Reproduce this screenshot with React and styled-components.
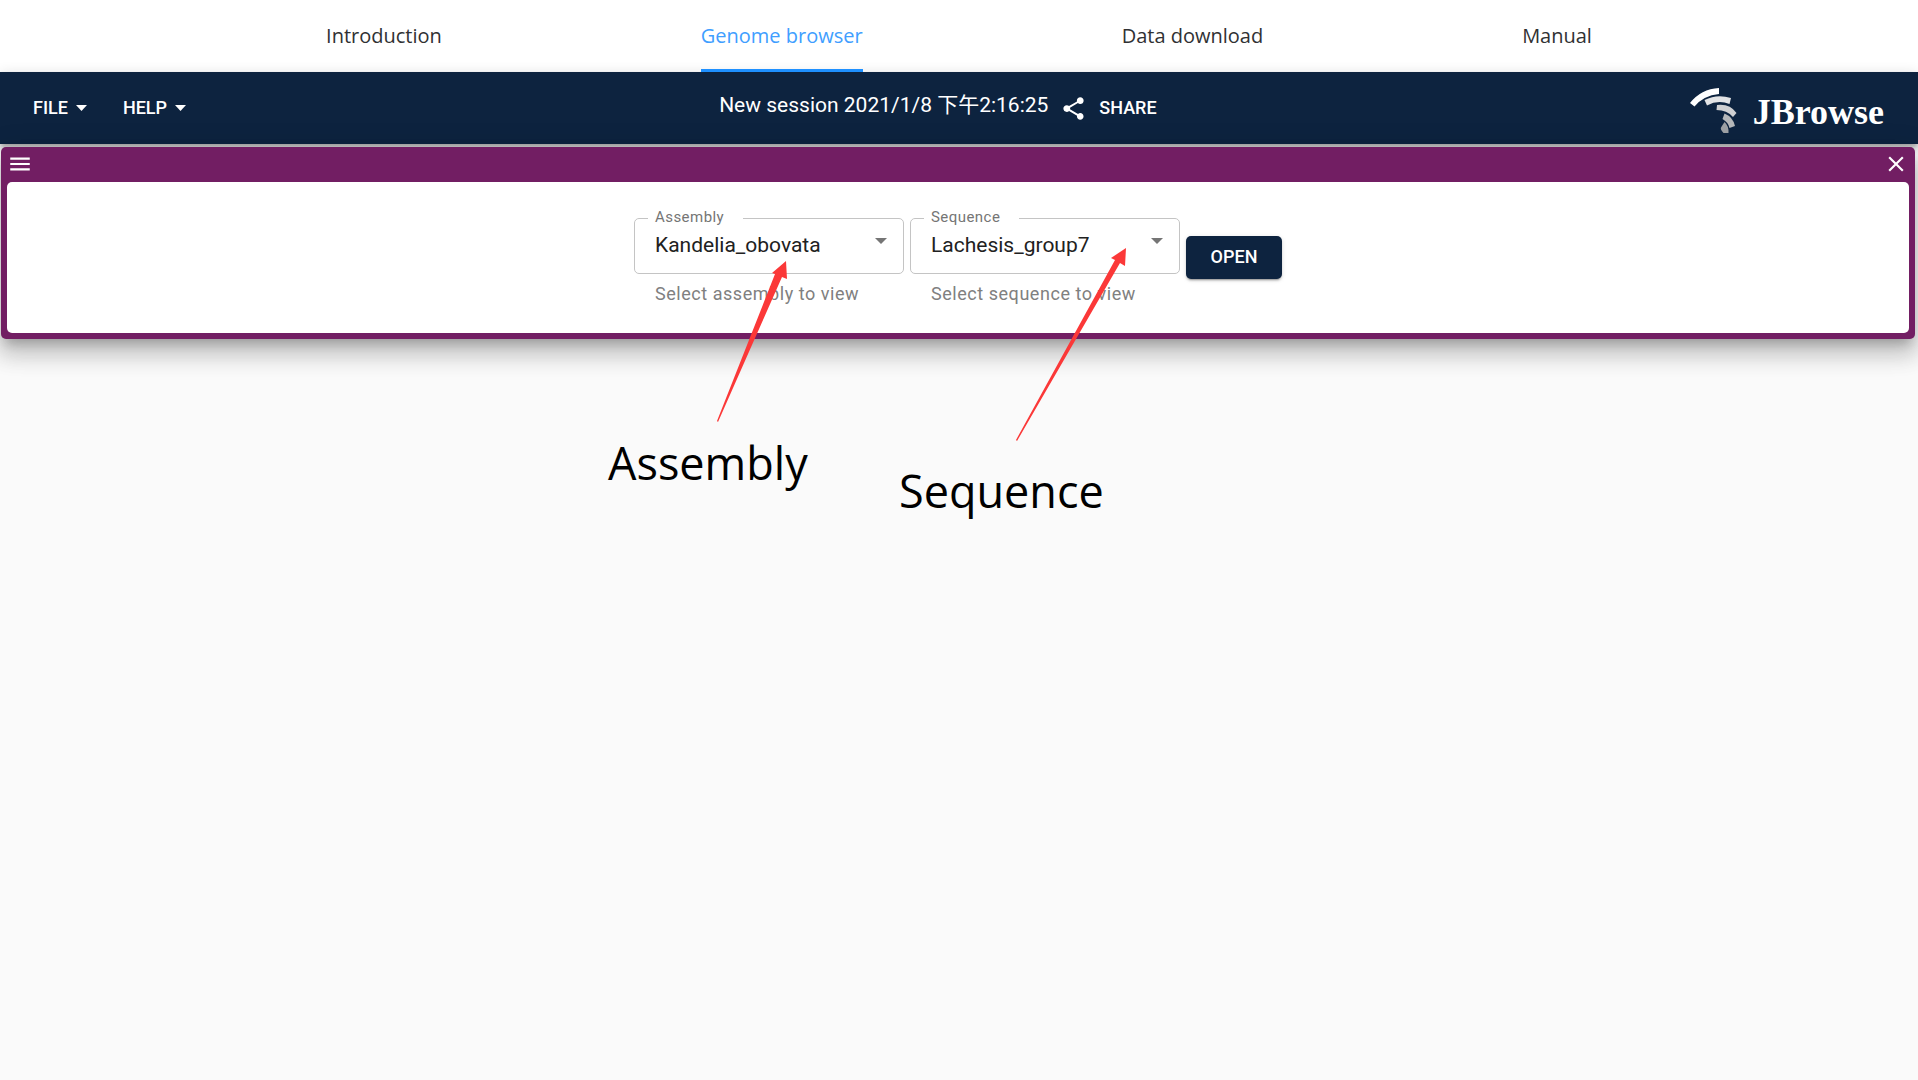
import React from "react";
import styled, { createGlobalStyle } from "styled-components";

const roboto = `Roboto, "Noto Sans CJK SC", sans-serif`;
const humanist = `"Open Sans", "Noto Sans", sans-serif`;
const navy = "#0d233f";
const purple = "#721e63";

const GlobalStyle = createGlobalStyle`
  *, *::before, *::after { box-sizing: border-box; }
  body { margin: 0; background: #fafafa; font-family: ${roboto}; }
`;

const Page = styled.div`
  min-height: 100vh;
  overflow-x: hidden;
`;

const SiteNav = styled.nav`
  display: flex;
  justify-content: space-between;
  height: 72px;
  padding: 0 17%;
  background: #fff;
`;

const NavLink = styled.a`
  display: flex;
  align-items: center;
  height: 72px;
  border-top: 3px solid transparent;
  border-bottom: 3px solid ${(p) => (p.$active ? "#1e90ff" : "transparent")};
  color: ${(p) => (p.$active ? "#409eff" : "#303133")};
  font: 400 20px/24px ${humanist};
  text-decoration: none;
  white-space: nowrap;
`;

const AppBar = styled.header`
  display: flex;
  justify-content: space-between;
  align-items: center;
  height: 72px;
  padding: 0 34px 0 33px;
  background: ${navy};
  box-shadow: 0 3px 5px -1px rgba(0, 0, 0, 0.2), 0 5px 6px rgba(0, 0, 0, 0.14),
    0 1px 12px rgba(0, 0, 0, 0.12);
  color: #fff;
`;

const MenuGroup = styled.div`
  display: flex;
  gap: 36px;
`;

const BarButton = styled.button`
  display: flex;
  align-items: center;
  gap: ${(p) => p.$gap || 8}px;
  padding: 0;
  border: 0;
  background: none;
  color: inherit;
  font: 500 18px/24px ${roboto};
  cursor: pointer;
`;

const Session = styled.div`
  display: flex;
  align-items: center;
  gap: 12px;
`;

const SessionName = styled.span`
  padding-bottom: 6px;
  font: 400 21px/24px ${roboto};
  white-space: nowrap;
`;

const Brand = styled.div`
  display: flex;
  align-items: center;
  gap: 16px;
  padding-top: 4px;
`;

const BrandName = styled.span`
  padding-top: 4px;
  font: 700 36px/44px "Liberation Serif", serif;
`;

const ViewPanel = styled.main`
  margin: 3px 3px 0 1px;
  padding: 0 6px 6px;
  border-radius: 5px;
  background: ${purple};
  box-shadow: 0 9px 10px -5px rgba(0, 0, 0, 0.2),
    0 15px 21px 3px rgba(0, 0, 0, 0.14), 0 6px 28px 5px rgba(0, 0, 0, 0.12);
`;

const ViewHeader = styled.div`
  display: flex;
  align-items: center;
  justify-content: space-between;
  height: 35px;
  padding-bottom: 2px;
`;

const IconButton = styled.button`
  display: flex;
  padding: 0;
  border: 0;
  background: none;
  color: #fff;
  cursor: pointer;
`;

const ViewBody = styled.section`
  display: flex;
  justify-content: center;
  padding: 27px 0;
  border-radius: 5px;
  background: #fff;
`;

const ImportForm = styled.form`
  position: relative;
  display: flex;
  gap: 6px;
`;

const Field = styled.div`
  display: flex;
  flex-direction: column;
  gap: 8px;
`;

const Outline = styled.fieldset`
  position: relative;
  width: 270px;
  height: 65px;
  margin: 0;
  padding: 0 13px;
  border: 1px solid #c4c4c4;
  border-radius: 5px;
`;

const Legend = styled.legend`
  width: 95px;
  padding: 0 7px 2px;
  color: #757575;
  font: 400 15px/16px ${roboto};
  letter-spacing: 0.03em;
`;

const Select = styled.select`
  display: block;
  width: 100%;
  height: 36px;
  padding: 0 24px 0 7px;
  border: 0;
  appearance: none;
  background: none;
  color: #212121;
  font: 400 21px/24px ${roboto};
`;

const SelectCaret = styled.span`
  position: absolute;
  top: 11px;
  right: 16px;
  display: flex;
  color: #757575;
  pointer-events: none;
`;

const Helper = styled.p`
  margin: 0;
  padding-left: 21px;
  color: #808080;
  font: 400 18px/24px ${roboto};
  letter-spacing: 0.03em;
`;

const OpenButton = styled.button`
  width: 96px;
  height: 43px;
  margin-top: 27px;
  padding: 0 0 2px;
  border: 0;
  border-radius: 5px;
  background: ${navy};
  box-shadow: 0 3px 1px -2px rgba(0, 0, 0, 0.2), 0 2px 2px rgba(0, 0, 0, 0.14),
    0 1px 5px rgba(0, 0, 0, 0.12);
  color: #fff;
  font: 500 18px/24px ${roboto};
  cursor: pointer;
`;

const Callouts = styled.svg`
  position: absolute;
  top: 0;
  left: 0;
  overflow: visible;
  pointer-events: none;
`;

const CalloutText = styled.span`
  position: absolute;
  top: ${(p) => p.$top}px;
  left: ${(p) => p.$left}px;
  color: #000;
  font: 400 45px/64px ${humanist};
  pointer-events: none;
`;

const Caret = ({ width = 11, height = 6 }) => (
  <svg width={width} height={height} viewBox="0 0 10 5" preserveAspectRatio="none" fill="currentColor" aria-hidden="true">
    <path d="M0 0h10L5 5z" />
  </svg>
);

const ShareIcon = () => (
  <svg width="27" height="27" viewBox="0 0 24 24" fill="currentColor" aria-hidden="true">
    <path d="M18 16.08c-.76 0-1.44.3-1.96.77L8.91 12.7c.05-.23.09-.46.09-.7s-.04-.47-.09-.7l7.05-4.11c.54.5 1.25.81 2.04.81 1.66 0 3-1.34 3-3s-1.34-3-3-3-3 1.34-3 3c0 .24.04.47.09.7L8.04 9.81C7.5 9.31 6.79 9 6 9c-1.66 0-3 1.34-3 3s1.34 3 3 3c.79 0 1.5-.31 2.04-.81l7.12 4.16c-.05.21-.08.43-.08.65 0 1.61 1.31 2.92 2.92 2.92s2.92-1.31 2.92-2.92-1.31-2.92-2.92-2.92z" />
  </svg>
);

const MenuIcon = () => (
  <svg width="26" height="26" viewBox="0 0 24 24" fill="currentColor" aria-hidden="true">
    <path d="M3 18h18v-2H3v2zm0-5h18v-2H3v2zm0-7v2h18V6H3z" />
  </svg>
);

const CloseIcon = () => (
  <svg width="26" height="26" viewBox="0 0 24 24" fill="currentColor" aria-hidden="true">
    <path d="M19 6.41L17.59 5 12 10.59 6.41 5 5 6.41 10.59 12 5 17.59 6.41 19 12 13.41 17.59 19 19 17.59 13.41 12z" />
  </svg>
);

const BrandMark = () => (
  <svg width="47" height="45" viewBox="0 0 47 45" aria-hidden="true">
    <path d="M0 15Q11 1 29 0V6Q13.500 7.500 4.500 18.500z" fill="#fff" />
    <path d="M14.500 12Q27 5.500 41 10L39.500 16Q28 11.500 17 17.500z" fill="#e2e3e5" />
    <path d="M27 17Q40 15.500 46.500 25L43 29Q37 22 26.500 22z" fill="#cfd0d2" />
    <path d="M34.500 25.500Q43 29 45 38L39.500 40Q38.500 34.500 32.500 31z" fill="#b5b7b9" />
    <path d="M34.500 34Q39 38 38.500 45H33.500Q30 41 31 39.500z" fill="#9c9fa3" />
  </svg>
);

const links = ["Introduction", "Genome browser", "Data download", "Manual"];

const fields = [
  { id: "assembly", label: "Assembly", value: "Kandelia_obovata", helper: "Select assembly to view" },
  { id: "sequence", label: "Sequence", value: "Lachesis_group7", helper: "Select sequence to view" },
];

export default function App() {
  return (
    <Page>
      <GlobalStyle />
      <SiteNav>
        {links.map((text) => (
          <NavLink key={text} href="#" $active={text === "Genome browser"}>
            {text}
          </NavLink>
        ))}
      </SiteNav>
      <AppBar>
        <MenuGroup>
          <BarButton type="button">FILE <Caret /></BarButton>
          <BarButton type="button">HELP <Caret /></BarButton>
        </MenuGroup>
        <Session>
          <SessionName>New session 2021/1/8 下午2:16:25</SessionName>
          <BarButton type="button" $gap={12}><ShareIcon /> SHARE</BarButton>
        </Session>
        <Brand>
          <BrandMark />
          <BrandName>JBrowse</BrandName>
        </Brand>
      </AppBar>
      <ViewPanel>
        <ViewHeader>
          <IconButton type="button" aria-label="View menu"><MenuIcon /></IconButton>
          <IconButton type="button" aria-label="Close view"><CloseIcon /></IconButton>
        </ViewHeader>
        <ViewBody>
          <ImportForm>
            {fields.map((f) => (
              <Field key={f.id}>
                <Outline>
                  <Legend><label htmlFor={f.id}>{f.label}</label></Legend>
                  <Select id={f.id} defaultValue={f.value} aria-describedby={`${f.id}-help`}>
                    <option>{f.value}</option>
                  </Select>
                  <SelectCaret><Caret width={12} height={6} /></SelectCaret>
                </Outline>
                <Helper id={`${f.id}-help`}>{f.helper}</Helper>
              </Field>
            ))}
            <OpenButton type="button">OPEN</OpenButton>
            <Callouts width="634" height="240" viewBox="0 0 634 240" fill="#fb3838" aria-hidden="true">
              <path d="M152 52L153 70L148 68L84 213L83 212L141 65L138 64z" />
              <path d="M492 39L491 57L486 54L383 232L382 231L481 51L477 49z" />
            </Callouts>
            <CalloutText $top={222} $left={-26}>Assembly</CalloutText>
            <CalloutText $top={250} $left={265}>Sequence</CalloutText>
          </ImportForm>
        </ViewBody>
      </ViewPanel>
    </Page>
  );
}
